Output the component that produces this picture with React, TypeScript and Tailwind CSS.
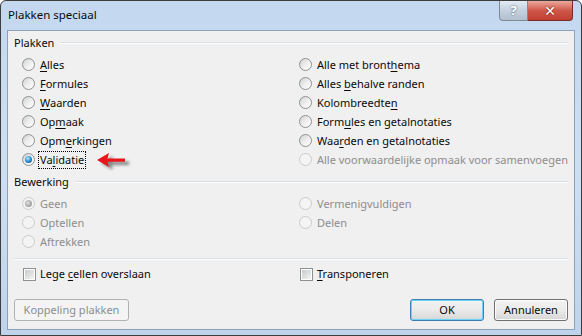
import type { ReactNode } from 'react'

const font = { fontFamily: '"Noto Sans", "DejaVu Sans", sans-serif' }

function Radio({ checked = false, disabled = false }: { checked?: boolean; disabled?: boolean }) {
  return (
    <span
      className={`inline-flex h-[13px] w-[13px] shrink-0 items-center justify-center rounded-full border ${
        disabled
          ? 'border-[#c9cbcc] bg-[#f4f4f4]'
          : 'border-[#8e9193] bg-gradient-to-br from-[#cfd1d2] via-[#eeeeee] to-[#ffffff]'
      }`}
    >
      {checked && (
        <span
          className={`h-[7px] w-[7px] rounded-full ${
            disabled
              ? 'bg-[radial-gradient(circle_at_40%_40%,#e0e0e0,#a6a6a6_60%,#8c8c8c)]'
              : 'bg-[radial-gradient(circle_at_40%_35%,#b8ecff,#2b8ed2_50%,#0b3a66)]'
          }`}
        />
      )}
    </span>
  )
}

function Check() {
  return (
    <span className="inline-flex h-[13px] w-[13px] shrink-0 items-center justify-center border border-[#8e9193] bg-white">
      <span className="h-[9px] w-[9px] bg-gradient-to-br from-[#c9cbcc] to-[#f4f4f4]" />
    </span>
  )
}

function U({ children }: { children: ReactNode }) {
  return <span className="underline underline-offset-2">{children}</span>
}

function Option({ label, checked, disabled, focus }: { label: ReactNode; checked?: boolean; disabled?: boolean; focus?: boolean }) {
  return (
    <div className="flex h-[19px] items-center gap-[5px]">
      <Radio checked={checked} disabled={disabled} />
      <span
        className={`whitespace-nowrap leading-[16px] ${disabled ? 'text-[#8d8d8d]' : 'text-[#0a0a0a]'} ${
          focus ? '-ml-[2px] border border-dotted border-black px-[1px]' : ''
        }`}
      >
        {label}
      </span>
    </div>
  )
}

function GroupLabel({ children }: { children: ReactNode }) {
  return (
    <div className="flex h-[14px] items-center gap-[6px]">
      <span className="whitespace-nowrap leading-[14px] text-[#0a0a0a]">{children}</span>
      <div className="flex-1 border-t border-b border-t-[#d5dfe5] border-b-white" />
    </div>
  )
}

// red annotation arrow pointing at the selected option
function Arrow() {
  return (
    <svg className="absolute left-[74px] top-[1px]" width="38" height="20" viewBox="0 0 38 20">
      <defs>
        <filter id="sh" x="-20%" y="-40%" width="160%" height="200%">
          <feGaussianBlur stdDeviation="1.6" />
        </filter>
      </defs>
      <path d="M3 10 L15 3 L13.5 8.4 L31 8.4 L31 12 L13.5 12 L15 17 Z" fill="#000" opacity="0.45" filter="url(#sh)" transform="translate(2 2)" />
      <path d="M1 9 L13 2 L11.5 7.4 L29 7.4 L29 10.8 L11.5 10.8 L13 16 Z" fill="#e8161b" />
    </svg>
  )
}

function Btn({ children, variant }: { children: ReactNode; variant: 'default' | 'normal' | 'disabled' }) {
  const cls =
    variant === 'default'
      ? 'border-[#3c7fb1] shadow-[inset_0_0_0_1px_#6ad5f7] bg-gradient-to-b from-[#f2f2f2] via-[#ebebeb] to-[#d6d6d6] text-[#0a0a0a]'
      : variant === 'normal'
        ? 'border-[#707070] shadow-[inset_0_0_0_1px_#fcfcfc] bg-gradient-to-b from-[#f2f2f2] via-[#ebebeb] to-[#d6d6d6] text-[#0a0a0a]'
        : 'border-[#adb2b5] bg-[#f4f4f4] text-[#8d8d8d]'
  return (
    <div className={`flex h-[22px] items-center justify-center rounded-[3px] border ${cls}`}>{children}</div>
  )
}

export default function App() {
  return (
    <div className="h-[336px] w-[582px] overflow-hidden bg-white" style={font}>
      <div className="flex h-full w-full flex-col rounded-t-[6px] border border-[#3d3d3d] bg-gradient-to-b from-[#c3d8ef] via-[#cddff3] to-[#bfd4ec] text-[11px]">
        {/* Title bar */}
        <div className="flex h-[29px] shrink-0 items-start justify-between">
          <div className="pl-[7px] pt-[6px] text-[11.5px] leading-[16px] text-[#0a0a0a]">Plakken speciaal</div>
          <div className="mr-[8px] flex h-[20px]">
            <div className="flex w-[29px] items-center justify-center rounded-bl-[4px] border border-t-0 border-[#7f8b99] bg-gradient-to-b from-[#e3ebf4] via-[#c5d1de] to-[#b2c0cf] text-[13px] font-bold text-white [text-shadow:0_0_2px_#3a4a5c]">
              ?
            </div>
            <div className="flex w-[45px] items-center justify-center rounded-br-[4px] border border-l-0 border-t-0 border-[#7a2a26] bg-gradient-to-b from-[#e9a99b] via-[#d0574a] to-[#c23e32] text-[14px] font-bold text-white [text-shadow:0_0_2px_#5a1410]">
              ✕
            </div>
          </div>
        </div>

        {/* Client area */}
        <div className="mx-[6px] mb-[5px] flex flex-1 flex-col border border-[#8da2b9] bg-[#f0f0f0] pb-[8px] pl-[6px] pr-[6px] pt-[5px]">
          <GroupLabel>Plakken</GroupLabel>
          <div className="mt-[5px] grid grid-cols-[277px_1fr] pl-[8px]">
            <div className="flex flex-col">
              <Option label={<><U>A</U>lles</>} />
              <Option label={<><U>F</U>ormules</>} />
              <Option label={<><U>W</U>aarden</>} />
              <Option label={<>Op<U>m</U>aak</>} />
              <Option label={<>Opm<U>e</U>rkingen</>} />
              <div className="relative">
                <Option label={<>Va<U>l</U>idatie</>} checked focus />
                <Arrow />
              </div>
            </div>
            <div className="flex flex-col">
              <Option label={<>Alle met bront<U>h</U>ema</>} />
              <Option label={<>Alles <U>b</U>ehalve randen</>} />
              <Option label={<>Kolombreedte<U>n</U></>} />
              <Option label={<>Form<U>u</U>les en getalnotaties</>} />
              <Option label={<>Waa<U>r</U>den en getalnotaties</>} />
              <Option label="Alle voorwaardelijke opmaak voor samenvoegen" disabled />
            </div>
          </div>

          <div className="mt-[6px]">
            <GroupLabel>Bewerking</GroupLabel>
          </div>
          <div className="mt-[5px] grid grid-cols-[277px_1fr] pl-[8px]">
            <div className="flex flex-col">
              <Option label="Geen" checked disabled />
              <Option label="Optellen" disabled />
              <Option label="Aftrekken" disabled />
            </div>
            <div className="flex flex-col">
              <Option label="Vermenigvuldigen" disabled />
              <Option label="Delen" disabled />
            </div>
          </div>

          <div className="mt-[7px] border-t border-b border-t-[#d5dfe5] border-b-white" />

          <div className="mt-[5px] grid grid-cols-[277px_1fr] pl-[9px]">
            <div className="flex h-[19px] items-center gap-[4px]">
              <Check />
              <span className="whitespace-nowrap text-[#0a0a0a]">Lege <U>c</U>ellen overslaan</span>
            </div>
            <div className="flex h-[19px] items-center gap-[4px]">
              <Check />
              <span className="whitespace-nowrap text-[#0a0a0a]"><U>T</U>ransponeren</span>
            </div>
          </div>

          <div className="mt-auto flex items-center">
            <div className="w-[115px]">
              <Btn variant="disabled">Koppeling plakken</Btn>
            </div>
            <div className="ml-auto flex gap-[10px]">
              <div className="w-[74px]">
                <Btn variant="default">OK</Btn>
              </div>
              <div className="w-[74px]">
                <Btn variant="normal">Annuleren</Btn>
              </div>
            </div>
          </div>
        </div>
      </div>
    </div>
  )
}
